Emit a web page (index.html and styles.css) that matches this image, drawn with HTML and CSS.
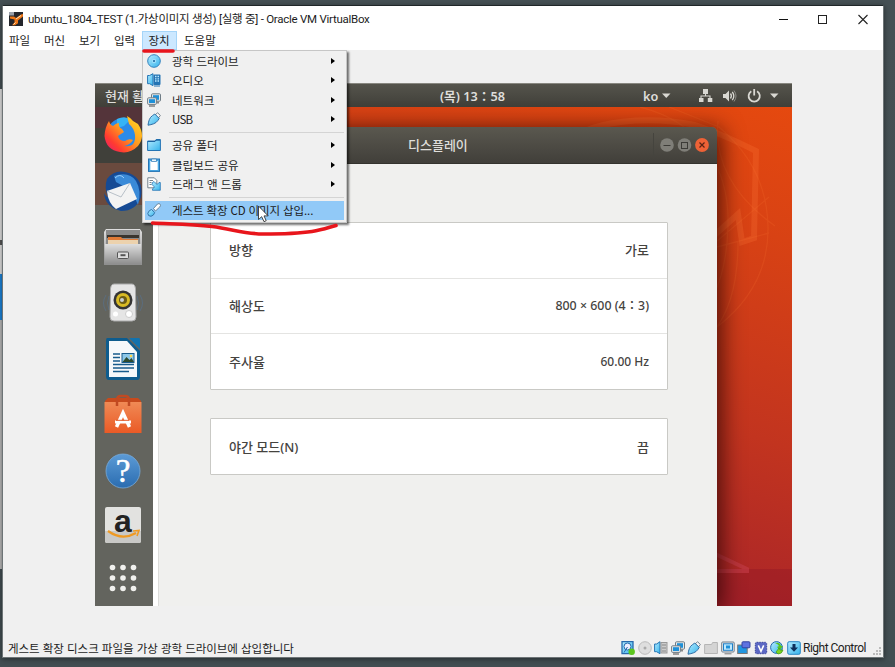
FILE: index.html
```html
<!DOCTYPE html>
<html lang="ko">
<head>
<meta charset="utf-8">
<title>ubuntu_1804_TEST - Oracle VM VirtualBox</title>
<link rel="stylesheet" href="styles.css">
</head>
<body>
<svg width="0" height="0" class="defs">
  <defs>
    <linearGradient id="cy" x1="0" y1="0" x2="1" y2="1"><stop offset="0" stop-color="#b5ecff"/><stop offset="1" stop-color="#35b3ec"/></linearGradient>
    <linearGradient id="silver" x1="0" y1="0" x2="0" y2="1"><stop offset="0" stop-color="#dedede"/><stop offset="1" stop-color="#8e8e8e"/></linearGradient>
    <linearGradient id="fox" x1="1" y1="0" x2="0" y2="1"><stop offset="0" stop-color="#ffe226"/><stop offset=".45" stop-color="#ff9a1f"/><stop offset=".75" stop-color="#ff3b30"/><stop offset="1" stop-color="#e3157c"/></linearGradient>
    <linearGradient id="orange" x1="0" y1="0" x2="0" y2="1"><stop offset="0" stop-color="#f08a55"/><stop offset="1" stop-color="#ea5a26"/></linearGradient>
    <linearGradient id="help" x1="0" y1="0" x2="0" y2="1"><stop offset="0" stop-color="#5c9bd6"/><stop offset="1" stop-color="#2a6cb0"/></linearGradient>
    <symbol id="net" viewBox="0 0 14 14"><rect x="4.500" y=".8" width="9" height="7.400" rx="1" fill="#e3e8ea" stroke="#6f7c85"/><rect x="6" y="2.200" width="6" height="4.600" fill="#1e90d8"/><path d="M11 8.500v2" stroke="#888" stroke-width="2"/><rect x=".6" y="4.800" width="8.800" height="6.600" rx="1" fill="#e3e8ea" stroke="#6f7c85"/><rect x="2" y="6.200" width="6" height="3.800" fill="#1e90d8"/><path d="M2 13h6" stroke="#777" stroke-width="1.400"/></symbol>
    <symbol id="usb" viewBox="0 0 14 14"><path d="M8.200 3 10.500.7l2.900 2.800-2.200 2.600z" fill="#f5f5f5" stroke="#6c7a86" stroke-width=".9"/><path d="M5.500 3.600 7.800 2l4.400 4.400-1.400 2.200C9 11.500 5 12.600 1 13.200 1.600 9 2.500 5.500 5.500 3.600z" fill="url(#cy)" stroke="#2f6ea5"/></symbol>
    <symbol id="audio" viewBox="0 0 14 14"><path d="M.6 2.500h2L6 .7v12l-3.400-2h-2z" fill="url(#cy)" stroke="#2474b4"/><rect x="6.500" y="1.500" width="7" height="10.500" rx="1" fill="#2474b4"/><path d="M8 3.500h1.500M10.500 3.500H12M8 5.800h1.500M10.500 5.800H12M8 8h1.500M10.500 8H12" stroke="#bdeaff" stroke-width="1.300"/><path d="M7 13h6" stroke="#2474b4"/></symbol>
  </defs>
</svg>

<div class="backdrop"><i class="paper"></i><i class="mark"></i><i class="blue"></i><i class="paper2"></i></div>

<div class="window">
  <header class="titlebar">
    <svg class="appicon" viewBox="0 0 14 14"><rect width="14" height="14" fill="#24262c"/><path d="M0 0h5v3.500H0z" fill="#9aa0aa"/><path d="M1 4.500h4l2 1.500 5-3.500 2-.5v2.500L9 8.500v2.800l-3 2H3l2.500-3V7.500L1 6.500z" fill="#f07818"/><path d="M7 7l5-3.500M4.500 12.500l2-2" stroke="#ffe3b8"/></svg>
    <span class="title">ubuntu_1804_TEST (1.가상이미지 생성) [실행 중] - Oracle VM VirtualBox</span>
    <svg class="winbtns" viewBox="0 0 90 12"><path d="M1 6.500h9" stroke="#111"/><rect x="40.500" y="2.500" width="8" height="8" fill="none" stroke="#222"/><path d="M80.500 2l9 9m0-9-9 9" stroke="#222" stroke-width="1.100"/></svg>
  </header>

  <nav class="menubar">
    <span>파일</span><span>머신</span><span>보기</span><span>입력</span><span class="open">장치</span><span>도움말</span>
  </nav>

  <main class="viewport">
    <section class="guest">
      <div class="panel">
        <span class="activities">현재 활동</span>
        <span class="clock">(목) 13：58</span>
        <span class="lang">ko</span>
        <svg class="tray" viewBox="0 0 120 20"><g fill="#d9d8d2"><path d="M0 7.500h8.500L4.250 12z"/><rect x="41" y="3" width="5" height="5"/><rect x="37" y="12" width="4.500" height="4"/><rect x="45.800" y="12" width="4.500" height="4"/><path d="M61 8h2.500L67 4.500v11L63.500 12H61z"/><path d="M108 7.500h8.500l-4.250 4.500z"/></g><g fill="none" stroke="#d9d8d2"><path d="M43.500 8v2M39 12v-2h9v2" stroke-width="1.100"/><path d="M68.500 7.500q1.800 2.500 0 5" stroke-width="1.300"/><path d="M70.300 5.800q3 4.200 0 8.400" stroke-width="1.300"/><path d="M72 4.500q4 5.500 0 11" stroke="#8d8c86"/><path d="M89.300 5.200a5.600 5.600 0 1 0 5.800 0M92.200 3v6.500" stroke-width="1.800"/></g></svg>
      </div>
      <div class="desktop">
        <svg class="wall" viewBox="0 0 697 499"><g fill="none" stroke="#ff7a3a" stroke-opacity=".16"><path d="M470 40C490 10 560 10 600 18q25 8 61 26l-2 87-12 4-4-28-40 36" stroke-width="6" stroke-opacity=".24"/><path d="M545 0c60 15 90 60 88 120s-20 90-60 112M623 14q-6 60 57 105M574 0l50 20Q672 60 673 120T622 220M615 140l59-50M622 140l52-14M643 135q0 60-25 90" stroke-width="1.300"/></g><path d="M610 462h87v37h-87z" fill="#8c1426" opacity=".35"/><path d="M618 446l34 16v2h-34" fill="none" stroke="#c23a44" stroke-opacity=".7" stroke-width="4"/></svg>
        <aside class="dock">
          <div class="cell"><svg viewBox="0 0 40 40"><circle cx="20" cy="19" r="16" fill="#2a8be8"/><path d="M14 4q9-4 13 1l-6 6-7 2z" fill="#35b4f5"/><path d="M24 1q4 2 6 5l5 3q8 12 0 22-8 8-18 6Q3 35 1.500 21 2 12 6 6q1 4 4 5 3-3 6-3-1 4 3 6l2 3-6 4q1 5 7 5 4-3 8-1-3 5-9 6 12 2 11-11-1-7-6-11z" fill="url(#fox)"/></svg></div>
          <div class="cell"><svg viewBox="0 0 40 40"><path d="M4 8Q12-3 26 2q15 6 12 24-5 14-20 14Q2 36 1 22q2 4 4 4Q1 16 4 8z" fill="#164a94"/><path d="M11 5q15-5 22 5 6 10 2 24l-6-14-16-9z" fill="#3a8ad8"/><path d="m4 20 23-8 7 16-21 10q-8-6-9-18z" fill="#f3f3f3"/><path d="m4 20 14 6 9-14" fill="none" stroke="#b8c0c8"/><path d="M12 7q5-5 9 0" fill="none" stroke="#9ad0ff"/></svg></div>
          <div class="cell"><svg viewBox="0 0 40 40"><path d="M3 2h34l2 3v33H1V5z" fill="url(#silver)"/><rect x="3" y="3" width="34" height="15" fill="#8a8a8a"/><path d="M4 8h32v3H4z" fill="#39342e"/><path d="M5 10h13l2 2h15v5H5z" fill="#e07a36"/><path d="M5 13h30v4H5z" fill="#ecd2ad"/><rect x="2" y="17" width="36" height="20" fill="url(#silver)"/><rect x="14.500" y="25" width="11" height="6.500" rx="1" fill="#ddd" stroke="#555"/><path d="M17.500 28.200h5" stroke="#555" stroke-width="2"/></svg></div>
          <div class="cell"><svg viewBox="0 0 40 40"><path d="M3 12q-5 8 0 16M37 12q5 8 0 16M6 13q-3 7 0 14M34 13q3 7 0 14" stroke="#5b6d7e" fill="none"/><path d="M11 1h18q4 0 3.500 8L33 34q0 4-4 4H11q-4 0-4-4L7.500 9Q7 1 11 1z" fill="#e5e5e5" stroke="#aaa"/><circle cx="20" cy="17" r="9.500" fill="#343434"/><circle cx="20" cy="17" r="7" fill="#d8ba24"/><circle cx="20" cy="17" r="4" fill="#6b5c16"/><circle cx="19" cy="17" r="2" fill="#c9ced0"/><circle cx="12.500" cy="31" r="2.500" fill="#fff"/><circle cx="26" cy="31" r="3.500" fill="#fff" stroke="#ccc"/></svg></div>
          <div class="cell"><svg class="tall" viewBox="0 0 40 44"><path d="M4 1h20l13 13v25q0 4-3 4H6q-3 0-3-4V4q0-3 1-3z" fill="#0e5c8e"/><path d="M6 4h18l10 11v25H6z" fill="#f5f8fa"/><path d="M26 1h10q1 0 1 2v9z" fill="#1272ad"/><path d="M10 17h7M10 20.500h7M10 24h7M10 27.500h21M10 31h21M10 34.500h16" stroke="#175b8c" stroke-width="1.600"/><rect x="19" y="16.500" width="12" height="9" fill="#8cc7e8" stroke="#175b8c"/><path d="m19.500 25 4-5 3 3 2-2 2.500 4z" fill="#2d4b2f"/><circle cx="28" cy="19" r="1.300" fill="#ffd54a"/></svg></div>
          <div class="cell"><svg viewBox="0 0 40 40"><path d="M2 6 5 3h30l3 3v4H2z" fill="#c74a1c"/><path d="M1.500 7h37v31h-37z" fill="url(#orange)"/><path d="M14 11V5q0-4 4-4h4q4 0 4 4v6" fill="none" stroke="#c04a22" stroke-width="2.500"/><path d="m13.500 32 6.500-14 6.500 14" fill="none" stroke="#fff" stroke-width="3.500"/><path d="M12 27h16" stroke="#fff" stroke-width="3"/><path d="M13 25.300h13" stroke="#e2592a"/></svg></div>
          <div class="cell"><svg viewBox="0 0 40 40"><circle cx="20" cy="20" r="17" fill="url(#help)" stroke="#77a9d8" stroke-width=".8"/><text x="20" y="30.500" class="q">?</text></svg></div>
          <div class="cell c8"><svg viewBox="0 0 40 40"><rect x="2" y="2" width="36" height="36" rx="2" fill="#e2e2e0"/><path d="M2 26h36v10q0 2-2 2H4q-2 0-2-2z" fill="#c9c9c7"/><text x="20" y="26.500" class="amz">a</text><path d="M5 26q14 10 28 2" fill="none" stroke="#ef9a23" stroke-width="2.200"/><path d="M30 26l6-.5-2 5.500" fill="none" stroke="#ef9a23" stroke-width="1.600"/></svg></div>
          <div class="cell c9"><svg viewBox="0 0 40 40"><g fill="#f1f1ee"><circle cx="9.500" cy="9.500" r="2.800"/><circle cx="20" cy="9.500" r="2.800"/><circle cx="30.500" cy="9.500" r="2.800"/><circle cx="9.500" cy="20" r="2.800"/><circle cx="20" cy="20" r="2.800"/><circle cx="30.500" cy="20" r="2.800"/><circle cx="9.500" cy="30.500" r="2.800"/><circle cx="20" cy="30.500" r="2.800"/><circle cx="30.500" cy="30.500" r="2.800"/></g></svg></div>
        </aside>
        <div class="settings">
          <div class="headerbar"><span class="htitle">디스플레이</span>
            <svg class="hbtns" viewBox="0 0 60 24"><path d="M.5 0v24" stroke="#45443e"/><circle cx="14" cy="12" r="6.800" fill="#7f7e78"/><circle cx="31.500" cy="12" r="6.800" fill="#7f7e78"/><circle cx="49" cy="12" r="6.900" fill="#ee6236"/><path d="M10.500 12.500h7" stroke="#3c3b37"/><rect x="28.500" y="9.500" width="6" height="6" fill="none" stroke="#3c3b37"/><path d="m46.500 9.500 5 5m0-5-5 5" stroke="#5a2313" stroke-width="1.200"/></svg>
          </div>
          <div class="appbody">
            <div class="side"></div>
            <div class="page">
              <div class="card">
                <div class="row"><span>방향</span><span>가로</span></div>
                <div class="row"><span>해상도</span><span class="res">800 × 600 (4：3)</span></div>
                <div class="row"><span>주사율</span><span class="hz">60.00 Hz</span></div>
              </div>
              <div class="card"><div class="row"><span>야간 모드(N)</span><span>끔</span></div></div>
            </div>
          </div>
        </div>
      </div>
    </section>
  </main>

  <footer class="statusbar">
    <span class="hint">게스트 확장 디스크 파일을 가상 광학 드라이브에 삽입합니다</span>
    <div class="indicators">
      <svg viewBox="0 0 14 14"><path d="M1 .7h11v12H1z" fill="url(#cy)" stroke="#2769ad" stroke-width="1.300"/><circle cx="6.500" cy="5.500" r="3.500" fill="#eef" stroke="#2769ad"/><path d="M3 11.500 6.500 6" stroke="#2769ad"/><circle cx="10.700" cy="10.700" r="3.200" fill="#5cc61e"/></svg>
      <svg viewBox="0 0 14 14"><circle cx="7" cy="7" r="6.300" fill="#dedede" stroke="#bbb"/><circle cx="7" cy="7" r="1.500" fill="#aaa"/></svg>
      <svg viewBox="0 0 14 14"><path d="M.6 3h2L6 .7v12l-3.400-2h-2z" fill="url(#cy)" stroke="#2474b4"/><rect x="7" y="1.500" width="6" height="10.500" fill="#ccc" stroke="#999"/><path d="M8 4h4M8 7h4M8 10h4" stroke="#888"/></svg>
      <svg><use href="#net"/></svg>
      <svg><use href="#usb"/></svg>
      <svg viewBox="0 0 14 14"><path d="M.6 3.500h7l1-2h4.800v11H.6z" fill="#d4d4d4" stroke="#b5b5b5"/></svg>
      <svg viewBox="0 0 14 14"><rect x=".7" y="1" width="12.500" height="10" rx="1" fill="#e7e7e7" stroke="#6f7f8c"/><rect x="2.500" y="2.800" width="9" height="6.500" fill="#bdeaff" stroke="#1e7fc8"/><rect x="5" y="4.500" width="4" height="3" fill="#1e90d8"/><path d="M3.500 12.800h7" stroke="#777"/></svg>
      <svg viewBox="0 0 14 14"><rect x=".7" y="4" width="9.500" height="8.500" fill="#2196e0" stroke="#777"/><rect x="5" y=".8" width="8" height="6" rx="1" fill="#5f72e0" stroke="#3442a0"/></svg>
      <svg viewBox="0 0 14 14"><rect x="1.300" y="1.300" width="11.400" height="11.400" rx="1.500" fill="#5b67c4" stroke="#3b469c" stroke-dasharray="1.500 1"/><path d="m4.300 4.300 2.700 6 2.700-6" fill="none" stroke="#fff" stroke-width="1.600"/></svg>
      <svg viewBox="0 0 14 14"><circle cx="6.500" cy="6.500" r="5.900" fill="url(#cy)" stroke="#2769ad"/><path d="M5 2q5-1 6 3l2 0-3 4-3-3 2-1Q8 3 5 2z" fill="#58c322"/><path d="M13 9q-1 4-5 4l-2-2 3-4q0 3 4 2z" fill="#7ed321" stroke="#3d9a12" stroke-width=".7"/></svg>
      <svg viewBox="0 0 14 14"><rect x=".7" y=".7" width="12.600" height="12.600" rx="1.500" fill="url(#cy)" stroke="#2a86c4"/><path d="M5.500 3h3v3.500H11l-4 4.300L3 6.500h2.500z" fill="#0d2f5c"/></svg>
    </div>
    <span class="hostkey">Right Control</span>
    <svg class="grip" viewBox="0 0 9 9"><g fill="#bbb"><path d="M6 0h2v2H6zM3 3h2v2H3zM6 3h2v2H6zM0 6h2v2H0zM3 6h2v2H3zM6 6h2v2H6z"/></g></svg>
  </footer>
</div>

<div class="menu">
  <div class="item"><svg viewBox="0 0 14 14"><circle cx="7" cy="7" r="6.300" fill="url(#cy)" stroke="#3482bd"/><circle cx="7" cy="7" r="2.200" fill="#9de0fb"/><circle cx="7" cy="7" r="1" fill="#17609c"/></svg><span>광학 드라이브</span><b></b></div>
  <div class="item"><svg><use href="#audio"/></svg><span>오디오</span><b></b></div>
  <div class="item"><svg><use href="#net"/></svg><span>네트워크</span><b></b></div>
  <div class="item"><svg><use href="#usb"/></svg><span class="latin">USB</span><b></b></div>
  <hr>
  <div class="item"><svg viewBox="0 0 14 14"><path d="M.6 3h7.500l1-1.500h4.300v11H.6z" fill="url(#cy)" stroke="#2474b4"/><path d="M1 3.500h7l1-1.300h4" stroke="#1c639f" fill="none"/></svg><span>공유 폴더</span><b></b></div>
  <div class="item"><svg viewBox="0 0 14 14"><rect x="1.500" y="1" width="11" height="12.400" fill="#4aa8e4" stroke="#2474b4"/><rect x="3.300" y="3" width="7.400" height="9" fill="#fff"/><path d="M4.500 1h5v2.500h-5z" fill="#e8f5fc" stroke="#2474b4" stroke-width=".7"/></svg><span>클립보드 공유</span><b></b></div>
  <div class="item"><svg viewBox="0 0 14 14"><path d="M.8.8h6.500l2.500 2.500v7.500h-9z" fill="#fff" stroke="#75838e"/><path d="M2.500 3.500h3.500M2.500 5.500h2M2.500 7.500h2" stroke="#75838e"/><path d="M5.500 5.500 7 4.500l3 3L12 5.500h1.300v7.800H5.500V12l2-2-2.500-2.500z" fill="url(#cy)" stroke="#2474b4" stroke-width=".8"/></svg><span>드래그 앤 드롭</span><b></b></div>
  <hr>
  <div class="item active"><svg viewBox="0 0 14 14"><path d="M6.500 5.500 10.500 1q1.800-1 2.700.3t-.4 2.600L8.500 8z" fill="#fff" stroke="#5e7b92" stroke-width=".9"/><path d="m4.500 6.500 3.200 3Q7 12.500 4 13.300q-3.200 0-3.200-3Q2 7 4.500 6.500z" fill="url(#cy)" stroke="#3474a8"/></svg><span>게스트 확장 CD 이미지 삽입...</span></div>
</div>
<svg class="overlay" viewBox="0 0 895 667">
  <path d="M144 51H173" stroke="#e8151c" stroke-width="3.600" stroke-linecap="round"/>
  <path d="M152.500 223C173 224 192 224 212 226.500S245 234 263 234 302 233 312 231.500 327 228 336 225.500" fill="none" stroke="#e8151c" stroke-width="3.600" stroke-linecap="round" stroke-linejoin="round"/>
  <path d="M258.500 206v13.500l3.200-2.800 2.300 5 2.200-1-2.200-4.800h4.200z" fill="#fff" stroke="#333" stroke-width=".9"/>
</svg>
</body>
</html>
```
FILE: styles.css
```css
* { box-sizing: border-box; }
body {
  margin: 0; width: 895px; height: 667px; overflow: hidden; position: relative;
  background: linear-gradient(180deg, #455054, #424e52);
  font: 11.5px/16px "Noto Sans CJK KR", sans-serif; color: #1c1c1c;
}
.defs { position: absolute; }
.backdrop { position: absolute; left: 0; top: 0; width: 2px; height: 667px; display: flex; flex-direction: column; padding-top: 89px; }
.backdrop i { display: block; background: #dedede; }
.backdrop .paper { height: 151px; }
.backdrop .mark { height: 34px; border-top: 5px solid #555; }
.backdrop .blue { height: 46px; background: #1c83d8; }
.backdrop .paper2 { height: 249px; background: #b9b9b9; }

.window {
  display: flex; flex-direction: column; position: relative;
  margin: 5px 0 0 2px; width: 882px; height: 653px;
  background: #f0f0f0; border: 1px solid #6d7476; border-top-color: #1f2628;
  box-shadow: 0 1px 5px rgba(0,0,0,.45);
}
.titlebar { height: 25px; background: #fff; display: flex; align-items: center; padding: 0 15px 0 6px; }
.appicon { width: 14px; height: 14px; margin-right: 5px; }
.title { font-family: Roboto, "Noto Sans CJK KR", sans-serif; font-size: 11.5px; white-space: nowrap; letter-spacing: -.26px; }
.winbtns { width: 90px; height: 12px; margin-left: auto; }
.menubar { height: 19px; background: #fff; display: flex; }
.menubar span { width: 35px; padding-left: 6px; line-height: 19px; white-space: nowrap; }
.menubar .open { background: #cce8ff; box-shadow: inset 0 0 0 1px #a5d5f8; margin-left: -1px; width: 35px; padding-left: 6.500px; margin-right: 1px; }
.menubar span:last-child { width: auto; }

.viewport { flex: 1; padding: 33px 0 0 92px; }
.guest { width: 697px; height: 523px; display: flex; flex-direction: column; border-top: 1px solid #888780; overflow: hidden; color: #45433f; font-size: 13px; font-weight: 500; font-family: "Noto Sans", "Noto Sans CJK KR", sans-serif; }
.panel { height: 23px; display: flex; align-items: center; background: linear-gradient(#55544c, #403f39); color: #dfdedb; font-weight: 600; font-size: 12.700px; line-height: 20px; white-space: nowrap; }
.activities { width: 345px; padding-left: 10px; font-weight: 500; font-size: 13px; }
.clock { width: 203px; }
.lang { width: 19px; }
.tray { width: 120px; height: 20px; }
.desktop { flex: 1; display: flex; position: relative; background: linear-gradient(197deg, #e5490f 0, #d84214 19%, #c2341f 48%, #a82429 75%, #a02027 100%); }
.wall { position: absolute; inset: 0; width: 697px; height: 499px; }
.dock { width: 58px; position: relative; background: linear-gradient(#54343a 0 21px, #40403a 21px 56px, #6a4a3e 56px 98px, #63645e 98px); }
.cell { height: 56px; display: flex; align-items: center; justify-content: center; padding: 0 2px 1px 0; }
.cell svg { width: 40px; height: 40px; overflow: visible; }
.cell svg.tall { height: 44px; }
.c8 { height: 52px; }
.c9 { height: 54px; }
.q { font: 33px "Liberation Serif", serif; fill: #fff; stroke: #fff; stroke-width: .5px; text-anchor: middle; }
.amz { font: bold 32px "Liberation Sans", sans-serif; fill: #222; text-anchor: middle; }

.settings { width: 564px; margin-top: 20px; display: flex; flex-direction: column; position: relative; border-radius: 0 5px 0 0; box-shadow: 3px 3px 22px 2px rgba(30,0,0,.7); clip-path: inset(-30px -60px 0 0); }
.headerbar { height: 37px; background: linear-gradient(#5a584f, #413f3a); border-radius: 0 5px 0 0; border-bottom: 1px solid #34332e; display: flex; align-items: center; padding-left: 255px; color: #dfdedb; }
.htitle { font-weight: 500; width: 246px; }
.hbtns { width: 60px; height: 24px; margin-left: -1px; }
.appbody { flex: 1; display: flex; background: #f0f0ee; }
.side { width: 6px; background: #fff; border-right: 1px solid #dcdcda; }
.page { padding: 58px 0 0 51px; display: flex; flex-direction: column; gap: 28px; }
.card { width: 458px; background: #fff; border: 1px solid #c9c9c5; border-radius: 1px; }
.row { height: 55.700px; display: flex; align-items: center; justify-content: space-between; padding: 0 18px; border-top: 1px solid #e4e4e2; white-space: nowrap; }
.row:first-child { border-top: 0; height: 54.800px; }
.res { font-size: 12.400px; }
.hz { font-size: 12px; }

.statusbar { height: 18px; display: flex; align-items: center; padding: 0 0 1px 5px; white-space: nowrap; }
.hint { width: 613px; letter-spacing: -.04px; }
.indicators { display: flex; gap: 2.600px; width: 182px; padding-top: 1px; }
.indicators svg { width: 14px; height: 14px; flex: none; }
.hostkey { font-family: Roboto, sans-serif; font-size: 12px; letter-spacing: -.5px; padding-top: 1px; }
.grip { width: 9px; height: 9px; margin: 7px 1px 0 auto; }

.menu { position: absolute; left: 142px; top: 50px; width: 205px; height: 173px; padding: .5px 2px 0; background: #f0f0f0; border: 1px solid #c6c6c6; box-shadow: 2px 2px 2px rgba(0,0,0,.55); }
.item { height: 19.300px; display: flex; align-items: center; padding-left: 2px; white-space: nowrap; }
.item svg { width: 14px; height: 14px; margin-right: 11px; flex: none; }
.latin { letter-spacing: -.7px; }
.item b { margin: 0 9px 0 auto; border: solid transparent; border-width: 3.500px 0 3.500px 4px; border-left-color: #000; }
.item.active { background: #91c9f7; height: 19.500px; }
.item.active span { letter-spacing: -.12px; }
.menu hr { border: 0; height: 1px; margin: 3px 0 3px 24px; background: #d4d4d4; }
.overlay { position: absolute; left: 0; top: 0; width: 895px; height: 667px; }
```
